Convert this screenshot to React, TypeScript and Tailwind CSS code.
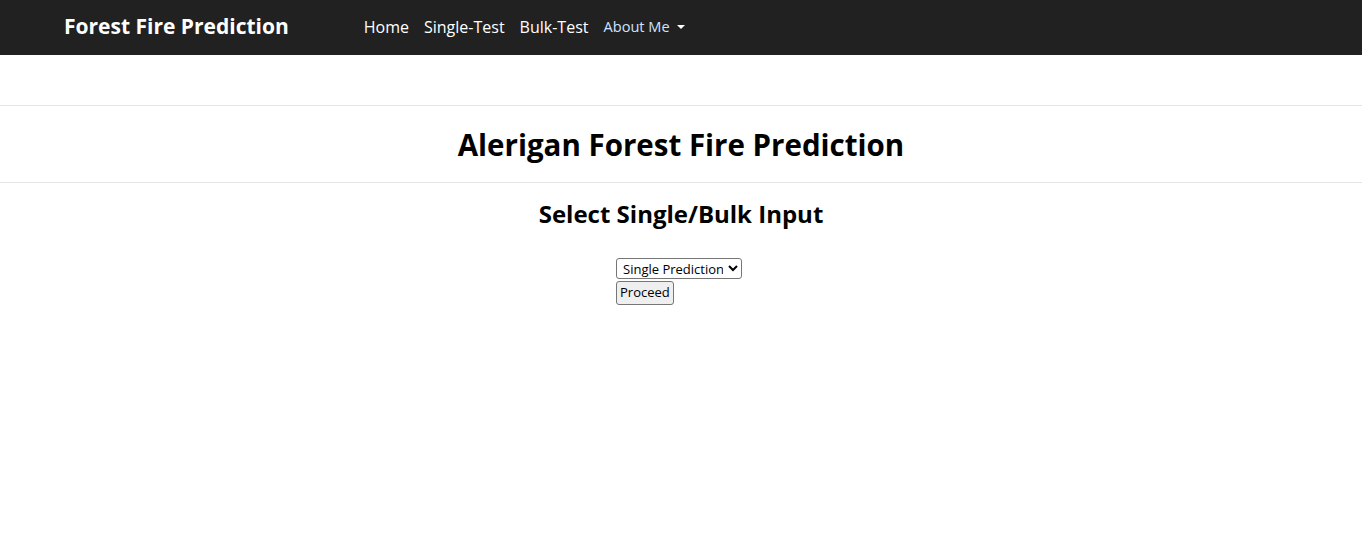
import { useState } from "react";

const font = { fontFamily: '"Open Sans", "Noto Sans", sans-serif' };

function NavBar() {
  return (
    <nav className="h-[55px] bg-[#212121] flex items-center">
      <a className="ml-[64px] text-white font-bold text-[21px] -mt-[1px]">Forest Fire Prediction</a>
      <ul className="ml-[75px] flex items-center gap-[15px] text-[16px] -mt-[1px]">
        <li className="text-white">Home</li>
        <li className="text-white">Single-Test</li>
        <li className="text-white">Bulk-Test</li>
        <li className="text-[#cfe2ff] text-[14.6px] flex items-center gap-[7px]">
          About Me
          <span className="w-0 h-0 border-l-[4px] border-r-[4px] border-t-[4px] border-l-transparent border-r-transparent border-t-white" />
        </li>
      </ul>
    </nav>
  );
}

export default function App() {
  const [mode, setMode] = useState("single");
  return (
    <div className="min-h-[557px] bg-white text-black" style={font}>
      <NavBar />
      <div className="h-[50px]" />
      <hr className="border-t border-[#e5e5e5]" />
      <h1 className="text-center font-bold text-[29.5px] leading-[74px] pt-[2px]">Alerigan Forest Fire Prediction</h1>
      <hr className="border-t border-[#e5e5e5]" />
      <h2 className="text-center font-bold text-[24px] mt-[15px] leading-[32px]">Select Single/Bulk Input</h2>
      <div className="w-[130px] mx-auto mt-[28px] flex flex-col items-start gap-[2px]">
        <select
          value={mode}
          onChange={(e) => setMode(e.target.value)}
          className="h-[21px] w-[126px] text-[13px] border border-[#767676] rounded-[3px] bg-white px-[2px]"
        >
          <option value="single">Single Prediction</option>
          <option value="bulk">Bulk Prediction</option>
        </select>
        <button className="h-[24px] px-[3px] text-[13px] border border-[#767676] rounded-[3px] bg-[#efefef]">Proceed</button>
      </div>
    </div>
  );
}
